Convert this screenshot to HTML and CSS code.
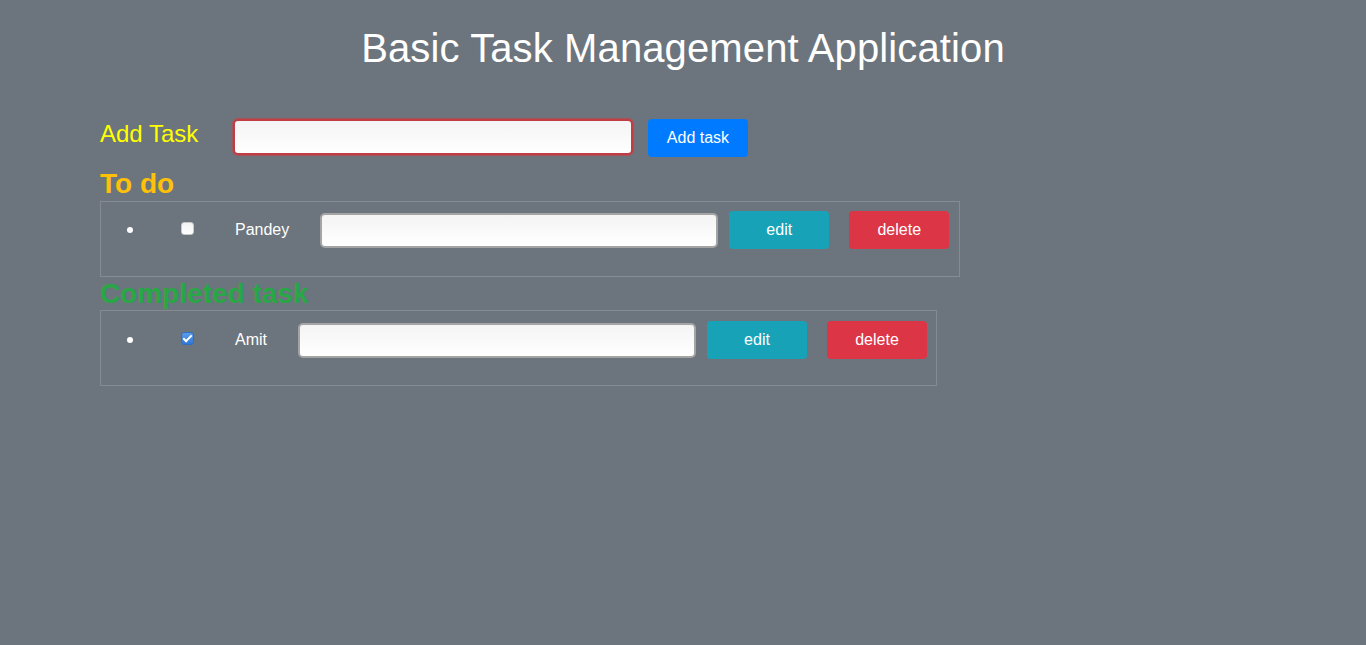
FILE: index.html
```html
<!DOCTYPE html>
<html>
<head>
<meta charset="utf-8">
<title>Basic Task Management Application</title>
<link rel="stylesheet" href="styles.css">
</head>
<body>
<h1 class="title">Basic Task Management Application</h1>
<main class="app">
  <div class="add-row">
    <label class="add-label" for="new-task">Add Task</label>
    <input class="text-input add-input" id="new-task" type="text">
    <button class="btn btn-primary add-btn">Add task</button>
  </div>
  <h3 class="section-title todo-title">To do</h3>
  <div class="task-box todo-box">
    <ul class="task-list">
      <li class="task">
        <span class="bullet"></span>
        <input class="check" type="checkbox">
        <span class="task-name">Pandey</span>
        <input class="text-input task-input" type="text">
        <button class="btn btn-info edit-btn">edit</button>
        <button class="btn btn-danger delete-btn">delete</button>
      </li>
    </ul>
  </div>
  <h3 class="section-title done-title">Completed task</h3>
  <div class="task-box done-box">
    <ul class="task-list">
      <li class="task">
        <span class="bullet"></span>
        <input class="check" type="checkbox" checked>
        <span class="task-name">Amit</span>
        <input class="text-input task-input" type="text">
        <button class="btn btn-info edit-btn">edit</button>
        <button class="btn btn-danger delete-btn">delete</button>
      </li>
    </ul>
  </div>
</main>
</body>
</html>
```
FILE: styles.css
```css
html, body {
  margin: 0;
  padding: 0;
}
body {
  background: #6c757d;
  font-family: "Liberation Sans", Arial, sans-serif;
  color: #fff;
  min-height: 645px;
}
.title {
  margin: 0;
  padding-top: 24px;
  font-size: 40px;
  font-weight: 400;
  line-height: 48px;
  letter-spacing: 0.12px;
  text-align: center;
  color: #fff;
}
.app {
  padding: 47px 0 0 100px;
}
.add-row {
  display: flex;
  align-items: flex-start;
}
.add-label {
  font-size: 24px;
  line-height: 29px;
  color: #ffff00;
  width: 133px;
}
.text-input {
  box-sizing: border-box;
  height: 36px;
  border: 2px solid #a4a4a4;
  border-radius: 5px;
  background: linear-gradient(#f4f4f4, #ffffff);
  font: 16px "Liberation Sans", Arial, sans-serif;
  padding: 0 8px;
  outline: none;
}
.add-input {
  width: 400px;
  border-color: #c23c44;
  box-shadow: 0 0 1px 1px rgba(210, 60, 70, 0.6);
}
.btn {
  border: none;
  border-radius: 4px;
  color: #fff;
  font: 16px "Liberation Sans", Arial, sans-serif;
  width: 100px;
  height: 38px;
  padding: 0;
  cursor: pointer;
}
.btn-primary { background: #007bff; }
.btn-info { background: #17a2b8; }
.btn-danger { background: #dc3545; }
.add-btn {
  margin-left: 15px;
}
.section-title {
  margin: 0;
  font-size: 28px;
  font-weight: 700;
  line-height: 34px;
}
.todo-title {
  margin-top: 10px;
  color: #ffc107;
}
.done-title {
  color: #28a745;
  line-height: 33px;
}
.task-box {
  box-sizing: border-box;
  border: 1px solid #858b91;
  padding: 9px 0 27px 0;
}
.todo-box { width: 860px; }
.done-box {
  width: 837px;
  padding-top: 10px;
  padding-bottom: 26px;
}
.task-list {
  list-style: none;
  margin: 0;
  padding: 0;
}
.task {
  display: flex;
  align-items: center;
  height: 38px;
}
.bullet {
  width: 6px;
  height: 6px;
  border-radius: 50%;
  background: #fff;
  margin-left: 26px;
  margin-right: 48px;
}
.check {
  appearance: none;
  -webkit-appearance: none;
  box-sizing: border-box;
  position: relative;
  width: 13px;
  height: 13px;
  margin: 0 41px 3px 0;
  border: 1px solid #c8c8c8;
  border-radius: 3px;
  background: linear-gradient(#f2f2f2, #ffffff);
}
.check:checked {
  border-color: #2f6fc2;
  background: linear-gradient(#5b9be8, #2f78d6);
}
.check:checked::after {
  content: "";
  position: absolute;
  left: 3px;
  top: 0px;
  width: 3px;
  height: 7px;
  border: solid #fff;
  border-width: 0 2px 2px 0;
  transform: rotate(45deg);
}
.task-name {
  font-size: 16px;
  margin-right: 31px;
}
.task-input {
  width: 398px;
  height: 35px;
}
.edit-btn {
  margin-left: 11px;
}
.delete-btn {
  margin-left: 20px;
}
```
